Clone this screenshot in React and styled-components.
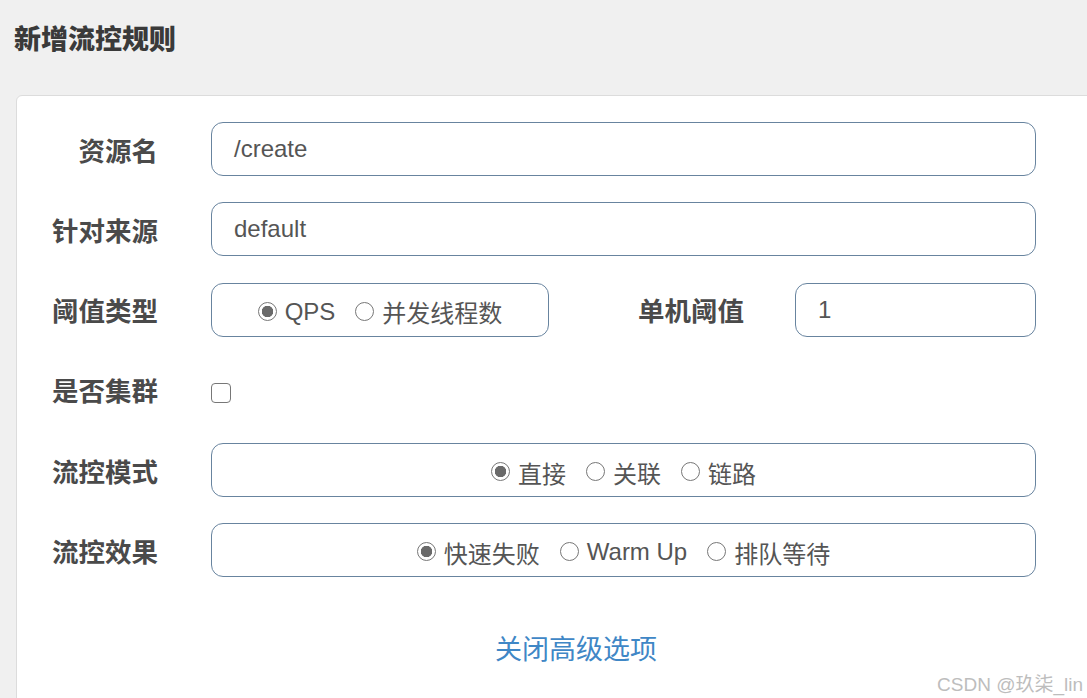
import React from 'react'
import styled, { createGlobalStyle } from 'styled-components'

const Global = createGlobalStyle`
  html, body { margin: 0; padding: 0; }
  body { background: #f0f0f0; font-family: "Liberation Sans", "Noto Sans CJK SC", sans-serif; }
`

const Page = styled.div`
  position: relative;
  height: 698px;
  overflow: hidden;
  background: #f0f0f0;
`

const Title = styled.h2`
  margin: 0;
  padding: 23px 0 0 14px;
  font-family: "Noto Sans CJK SC", sans-serif;
  font-size: 27px;
  line-height: 30px;
  font-weight: 900;
  color: #3a3a3a;
`

const Card = styled.div`
  margin: 42px -20px 0 16px;
  height: 640px;
  background: #fff;
  border: 1px solid #dcdcdc;
  border-radius: 6px;
  padding-top: 26px;
  box-sizing: border-box;
`

const Form = styled.div`
  display: flex;
  flex-direction: column;
  gap: 26.3px;
`

const Row = styled.div`
  display: flex;
  align-items: center;
  height: 54px;
`

const Label = styled.div`
  width: ${p => p.$w || 141}px;
  margin-left: ${p => p.$ml || 0}px;
  margin-right: ${p => p.$mr || 53}px;
  text-align: right;
  font-family: "Noto Sans CJK SC", sans-serif;
  font-size: 26.5px;
  font-weight: 700;
  color: #4a4a4a;
  white-space: nowrap;
`

const Input = styled.div`
  width: ${p => p.$w}px;
  height: 54px;
  box-sizing: border-box;
  border: 1.5px solid #68849f;
  border-radius: 12px;
  padding-left: 22px;
  display: flex;
  align-items: center;
  font-size: 24px;
  color: #555;
`

const RadioBox = styled.div`
  width: ${p => p.$w}px;
  height: 54px;
  box-sizing: border-box;
  border: 1.5px solid #68849f;
  border-radius: 12px;
  display: flex;
  align-items: center;
  justify-content: center;
  gap: 20px;
  padding-top: 4px;
`

const Option = styled.span`
  display: inline-flex;
  align-items: center;
  gap: 8px;
  font-size: 24px;
  color: #555;
  font-family: "Liberation Sans", "Noto Sans CJK SC", sans-serif;
`

const Dot = styled.span`
  width: 19px;
  height: 19px;
  box-sizing: border-box;
  border-radius: 50%;
  border: 1.5px solid #777;
  background: ${p => (p.$on ? 'radial-gradient(circle, #6a6a6a 0 5.5px, #fff 6px)' : '#fff')};
  margin-top: -1px;
`

const Check = styled.span`
  width: 20px;
  height: 20px;
  box-sizing: border-box;
  border: 1.5px solid #777;
  border-radius: 4px;
  margin-top: 6px;
`

const LinkRow = styled.div`
  margin-top: 56px;
  padding-left: 478px;
`

const Link = styled.a`
  font-family: "Noto Sans CJK SC", sans-serif;
  font-size: 27px;
  line-height: 30px;
  color: #3f87c6;
  text-decoration: none;
`

const Watermark = styled.div`
  position: absolute;
  right: 4px;
  bottom: 2px;
  font-size: 19px;
  color: #bdbdbd;
  font-family: "Liberation Sans", "Noto Sans CJK SC", sans-serif;
`

const Radios = ({ items, w }) => (
  <RadioBox $w={w}>
    {items.map((t, i) => (
      <Option key={t}>
        <Dot $on={i === 0} />
        {t}
      </Option>
    ))}
  </RadioBox>
)

export default function App() {
  return (
    <Page>
      <Global />
      <Title>新增流控规则</Title>
      <Card>
        <Form>
          <Row>
            <Label>资源名</Label>
            <Input $w={825}>/create</Input>
          </Row>
          <Row>
            <Label>针对来源</Label>
            <Input $w={825}>default</Input>
          </Row>
          <Row>
            <Label>阈值类型</Label>
            <Radios w={338} items={['QPS', '并发线程数']} />
            <Label $w={107} $ml={88} $mr={51}>单机阈值</Label>
            <Input $w={241}>1</Input>
          </Row>
          <Row>
            <Label>是否集群</Label>
            <Check />
          </Row>
          <Row>
            <Label>流控模式</Label>
            <Radios w={825} items={['直接', '关联', '链路']} />
          </Row>
          <Row>
            <Label>流控效果</Label>
            <Radios w={825} items={['快速失败', 'Warm Up', '排队等待']} />
          </Row>
        </Form>
        <LinkRow>
          <Link href="#">关闭高级选项</Link>
        </LinkRow>
      </Card>
      <Watermark>CSDN @玖柒_lin</Watermark>
    </Page>
  )
}
